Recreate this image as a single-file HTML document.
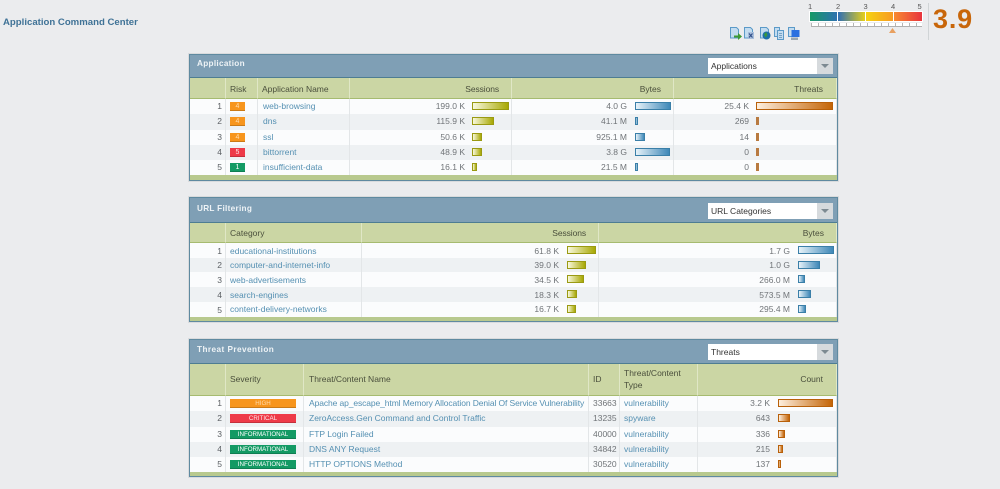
<!DOCTYPE html>
<html><head><meta charset="utf-8"><title>Application Command Center</title>
<style>
html,body{margin:0;padding:0;background:#ebecee;}
body{width:1000px;height:489px;overflow:hidden;position:relative;font-family:"Liberation Sans",sans-serif;font-size:8.5px;color:#707478;filter:blur(.3px);}
.title{position:absolute;left:3px;top:17px;font:bold 9.6px/12px "Liberation Sans",sans-serif;color:#3f7296;white-space:nowrap;}
.panel{position:absolute;left:189px;width:649px;box-sizing:border-box;border:1px solid #5f8aa0;box-shadow:0 0 0 1px #d9dbdd;background:#b8c98e;}
.head{height:22px;background:#7f9fb5;border-bottom:1px solid #4e7d92;position:relative;box-sizing:content-box;}
.head b{position:absolute;left:7px;top:3px;font:bold 8.2px/12px "Liberation Sans",sans-serif;color:#eef3f6;white-space:nowrap;letter-spacing:.3px;}
.sel{position:absolute;left:518px;top:3px;width:125px;height:16px;background:#fff;}
.sel span{position:absolute;left:3px;top:0;font:8.5px/16px "Liberation Sans",sans-serif;color:#333;white-space:nowrap;}
.sel i{position:absolute;right:0;top:0;width:16px;height:16px;background:#d6dadd;}
.sel i:after{content:"";position:absolute;left:4px;top:6px;border-left:4px solid transparent;border-right:4px solid transparent;border-top:4px solid #7d8a92;}
table{border-collapse:separate;border-spacing:0;table-layout:fixed;position:absolute;left:0;}
th{background:#cbd6a4;border-right:1px solid #e0e7c6;border-bottom:1px solid #a6bb70;font-weight:normal;color:#4a4f3c;text-align:left;padding:0 0 0 4px;box-sizing:border-box;line-height:11.5px;}
th.r,td.r{text-align:right;}
td{background:#fbfcfd;border-right:1px solid #e3e6e8;padding:0 0 0 4px;box-sizing:border-box;white-space:nowrap;position:relative;line-height:12px;overflow:hidden;}
tr.a td{background:#eef1f3;}
td.n{text-align:right;padding:0 3px 0 0;color:#5c6064;}
td.l{color:#5590b2;}
td.v{padding-left:0;}
.up td{padding-bottom:2px;}
.bar{position:absolute;top:3px;height:8px;box-sizing:border-box;border:1px solid;}
.s{border-color:#9a9a12;background:linear-gradient(90deg,#f8f8dc,#a8a804);}
.b{border-color:#3a7fa8;background:linear-gradient(90deg,#e6f2f9,#3f88b8);}
.t{border-color:#b8600a;background:linear-gradient(90deg,#fdeedd,#c46508);}
.m{border:0;background:#b87a40;width:3px;}
.bd{position:absolute;left:4px;top:3px;height:9px;box-sizing:border-box;text-align:center;font:6.2px/9px "Liberation Sans",sans-serif;color:#fff;border-bottom:1px solid rgba(0,0,0,.18);}
.bd2{font-weight:bold;font-size:7px;}
.o{background:#f7951d;color:#ffdcae;}.c{background:#ee3a48;color:#ffe6e8;}.g{background:#139a64;}
.num{position:absolute;top:2px;font:7.5px/9px "Liberation Sans",sans-serif;color:#555;}
.abs{position:absolute;}
</style></head><body>
<div class="title">Application Command Center</div>

<svg class="abs" style="left:729px;top:27px" width="72" height="14" viewBox="0 0 72 14">
<g fill="#c3dcf0" stroke="#5b9ac8" stroke-width="1">
<path d="M1.500 .5h6l2 2v8.500h-8z"/><path d="M15.500 .5h6l2 2v8.500h-8z"/><path d="M31.500 .5h6l2 2v8.500h-8z"/><path d="M45.500 .5h5v9h-5z"/><path d="M48.500 3.500h6v9h-6z"/><path d="M59.500 .5h6v9h-6z"/>
</g>
<path d="M5 8.500h4V6l4 3.500-4 3.500v-2.500H5z" fill="#3d9a35"/>
<rect x="19" y="5" width="6" height="7" fill="#a9bfdc"/><path d="M20 6.500l3.500 4m0-4l-3.500 4" stroke="#2f4f8a" stroke-width="1.100" fill="none"/>
<circle cx="37.500" cy="8.500" r="4" fill="#1d6fa8"/><path d="M35 7.500l2-2.500 1.500 3-2 2.500z" fill="#3a9a3a"/>
<path d="M50 6.500h3m-3 2h3m-3 2h3" stroke="#5f8fb5" stroke-width=".8"/>
<rect x="62.500" y="3" width="8" height="7" fill="#2a6fe0"/><rect x="62" y="10.500" width="7" height="2.500" fill="#9aa6b0"/>
</svg>

<div class="num" style="left:808px;top:2px">1</div><div class="num" style="left:836px;top:2px">2</div><div class="num" style="left:863.500px;top:2px">3</div><div class="num" style="left:891px;top:2px">4</div><div class="num" style="left:917.500px;top:2px">5</div>
<div class="abs" style="left:809px;top:11px;width:114px;height:11px;background:#fff"></div>
<div class="abs" style="left:810px;top:12px;width:27px;height:9px;background:linear-gradient(90deg,#169a66,#2f72b0)"></div>
<div class="abs" style="left:838px;top:12px;width:27px;height:9px;background:linear-gradient(90deg,#2f6fb5,#e6cf1a)"></div>
<div class="abs" style="left:866px;top:12px;width:27px;height:9px;background:linear-gradient(90deg,#f6d312,#f79a22)"></div>
<div class="abs" style="left:894px;top:12px;width:28px;height:9px;background:linear-gradient(90deg,#f88a30,#e8343e)"></div>
<div class="abs" style="left:811px;top:23px;width:111px;height:4px;background:repeating-linear-gradient(90deg,#b5b5b5 0,#b5b5b5 1px,#fff 1px,#fff 7px);border-bottom:1px solid #b0b0b0;box-sizing:border-box"></div>
<svg class="abs" style="left:889px;top:28px" width="7" height="5"><path d="M3.500 0l3.500 5H0z" fill="#e8a060"/></svg>
<div class="abs" style="left:928px;top:3px;width:1px;height:37px;background:#d0d4d6"></div>
<div class="abs" style="left:933px;top:4px;font:bold 27px/30px 'Liberation Sans',sans-serif;color:#c8660a;letter-spacing:.8px">3.9</div>

<div class="panel" style="top:54px;height:127px">
<div class="head"><b>Application</b><div class="sel"><span>Applications</span><i></i></div></div>
<table class="up" style="top:23px;width:647px">
<colgroup><col style="width:36px"><col style="width:32px"><col style="width:92px"><col style="width:162px"><col style="width:162px"><col style="width:163px"></colgroup>
<tr style="height:21px"><th style="padding-top:4px"></th><th style="padding-top:4px">Risk</th><th style="padding-top:4px">Application Name</th><th class="r" style="padding:4px 12px 0 0;letter-spacing:-.1px">Sessions</th><th class="r" style="padding:4px 12px 0 0">Bytes</th><th class="r" style="padding:4px 13px 0 0">Threats</th></tr>
<tr style="height:15px"><td class="n">1</td><td><span class="bd o" style="width:15px;font-size:7px">4</span></td><td class="l" style="padding-left:5px">web-browsing</td><td class="v r" style="padding-right:46px">199.0 K<span class="bar s" style="left:122px;width:37px"></span></td><td class="v r" style="padding-right:46px">4.0 G<span class="bar b" style="left:123px;width:36px"></span></td><td class="v r" style="padding-right:87px">25.4 K<span class="bar t" style="left:82px;width:77px"></span></td></tr>
<tr class="a" style="height:16px"><td class="n">2</td><td><span class="bd o" style="width:15px;font-size:7px">4</span></td><td class="l" style="padding-left:5px">dns</td><td class="v r" style="padding-right:46px">115.9 K<span class="bar s" style="left:122px;width:22px"></span></td><td class="v r" style="padding-right:46px">41.1 M<span class="bar b" style="left:123px;width:3px"></span></td><td class="v r" style="padding-right:87px">269<span class="bar m" style="left:82px"></span></td></tr>
<tr style="height:15px"><td class="n">3</td><td><span class="bd o" style="width:15px;font-size:7px">4</span></td><td class="l" style="padding-left:5px">ssl</td><td class="v r" style="padding-right:46px">50.6 K<span class="bar s" style="left:122px;width:10px"></span></td><td class="v r" style="padding-right:46px">925.1 M<span class="bar b" style="left:123px;width:10px"></span></td><td class="v r" style="padding-right:87px">14<span class="bar m" style="left:82px"></span></td></tr>
<tr class="a" style="height:15px"><td class="n">4</td><td><span class="bd c" style="width:15px;font-size:7px">5</span></td><td class="l" style="padding-left:5px">bittorrent</td><td class="v r" style="padding-right:46px">48.9 K<span class="bar s" style="left:122px;width:10px"></span></td><td class="v r" style="padding-right:46px">3.8 G<span class="bar b" style="left:123px;width:35px"></span></td><td class="v r" style="padding-right:87px">0<span class="bar m" style="left:82px"></span></td></tr>
<tr style="height:15px"><td class="n">5</td><td><span class="bd g" style="width:15px;font-size:7px">1</span></td><td class="l" style="padding-left:5px">insufficient-data</td><td class="v r" style="padding-right:46px">16.1 K<span class="bar s" style="left:122px;width:5px"></span></td><td class="v r" style="padding-right:46px">21.5 M<span class="bar b" style="left:123px;width:3px"></span></td><td class="v r" style="padding-right:87px">0<span class="bar m" style="left:82px"></span></td></tr>
</table></div>

<div class="panel" style="top:197px;height:125px">
<div class="head" style="height:24px"><b style="top:5px">URL Filtering</b><div class="sel" style="top:5px"><span>URL Categories</span><i></i></div></div>
<table style="top:25px;width:647px">
<colgroup><col style="width:36px"><col style="width:136px"><col style="width:237px"><col style="width:238px"></colgroup>
<tr style="height:20px"><th style="padding-top:2px"></th><th style="padding-top:2px">Category</th><th class="r" style="padding:2px 12px 0 0;letter-spacing:-.1px">Sessions</th><th class="r" style="padding:2px 12px 0 0">Bytes</th></tr>
<tr style="height:15px"><td class="n">1</td><td class="l">educational-institutions</td><td class="v r" style="padding-right:39px">61.8 K<span class="bar s" style="left:205px;width:29px"></span></td><td class="v r" style="padding-right:46px">1.7 G<span class="bar b" style="left:199px;width:36px"></span></td></tr>
<tr class="a" style="height:14px"><td class="n">2</td><td class="l">computer-and-internet-info</td><td class="v r" style="padding-right:39px">39.0 K<span class="bar s" style="left:205px;width:19px"></span></td><td class="v r" style="padding-right:46px">1.0 G<span class="bar b" style="left:199px;width:22px"></span></td></tr>
<tr style="height:15px"><td class="n">3</td><td class="l">web-advertisements</td><td class="v r" style="padding-right:39px">34.5 K<span class="bar s" style="left:205px;width:17px"></span></td><td class="v r" style="padding-right:46px">266.0 M<span class="bar b" style="left:199px;width:7px"></span></td></tr>
<tr class="a" style="height:15px"><td class="n">4</td><td class="l">search-engines</td><td class="v r" style="padding-right:39px">18.3 K<span class="bar s" style="left:205px;width:10px"></span></td><td class="v r" style="padding-right:46px">573.5 M<span class="bar b" style="left:199px;width:13px"></span></td></tr>
<tr style="height:15px"><td class="n">5</td><td class="l" style="padding-bottom:2px">content-delivery-networks</td><td class="v r" style="padding:0 39px 2px 0">16.7 K<span class="bar s" style="left:205px;width:9px"></span></td><td class="v r" style="padding:0 46px 2px 0">295.4 M<span class="bar b" style="left:199px;width:8px"></span></td></tr>
</table></div>

<div class="panel" style="top:339px;height:138px">
<div class="head" style="height:23px"><b style="top:4px;letter-spacing:.45px">Threat Prevention</b><div class="sel" style="top:4px"><span>Threats</span><i></i></div></div>
<table class="up" style="top:24px;width:647px">
<colgroup><col style="width:36px"><col style="width:78px"><col style="width:285px"><col style="width:31px"><col style="width:78px"><col style="width:139px"></colgroup>
<tr style="height:32px"><th></th><th>Severity</th><th style="padding-left:5px">Threat/Content Name</th><th>ID</th><th>Threat/Content<br>Type</th><th class="r" style="padding-right:13px">Count</th></tr>
<tr style="height:15px"><td class="n">1</td><td><span class="bd o" style="width:66px">HIGH</span></td><td class="l" style="padding-left:5px;letter-spacing:-.1px">Apache ap_escape_html Memory Allocation Denial Of Service Vulnerability</td><td>33663</td><td class="l">vulnerability</td><td class="v r" style="padding-right:66px">3.2 K<span class="bar t" style="left:80px;width:55px"></span></td></tr>
<tr class="a" style="height:16px"><td class="n">2</td><td><span class="bd c" style="width:66px">CRITICAL</span></td><td class="l" style="padding-left:5px">ZeroAccess.Gen Command and Control Traffic</td><td>13235</td><td class="l">spyware</td><td class="v r" style="padding-right:66px">643<span class="bar t" style="left:80px;width:12px"></span></td></tr>
<tr style="height:15px"><td class="n">3</td><td><span class="bd g" style="width:66px">INFORMATIONAL</span></td><td class="l" style="padding-left:5px">FTP Login Failed</td><td>40000</td><td class="l">vulnerability</td><td class="v r" style="padding-right:66px">336<span class="bar t" style="left:80px;width:7px"></span></td></tr>
<tr class="a" style="height:15px"><td class="n">4</td><td><span class="bd g" style="width:66px">INFORMATIONAL</span></td><td class="l" style="padding-left:5px">DNS ANY Request</td><td>34842</td><td class="l">vulnerability</td><td class="v r" style="padding-right:66px">215<span class="bar t" style="left:80px;width:5px"></span></td></tr>
<tr style="height:15px"><td class="n">5</td><td><span class="bd g" style="width:66px">INFORMATIONAL</span></td><td class="l" style="padding-left:5px">HTTP OPTIONS Method</td><td>30520</td><td class="l">vulnerability</td><td class="v r" style="padding-right:66px">137<span class="bar t" style="left:80px;width:3px"></span></td></tr>
</table></div>
</body></html>
